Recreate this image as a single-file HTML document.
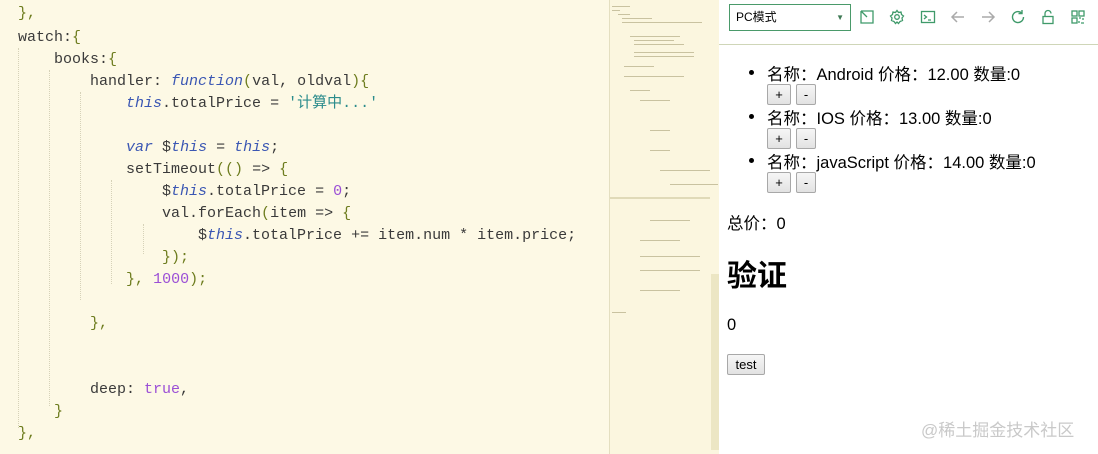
<!DOCTYPE html>
<html><head><meta charset="utf-8"><style>
body{margin:0;width:1098px;height:454px;overflow:hidden;background:#fdf9e5;font-family:"Liberation Sans","Noto Sans CJK SC",sans-serif;position:relative}
#ed{position:absolute;left:0;top:0;width:609px;height:454px;background:#fdf9e5}
.l{position:absolute;left:18px;font-family:"Liberation Mono","Noto Sans CJK SC",monospace;font-size:15px;line-height:22px;color:#3a3a3a;white-space:pre}
.p{color:#6e7d1f}.k{color:#3b57b3;font-style:italic}.s{color:#2b8c8c}.n{color:#9b4fd6}
.g{position:absolute;border-left:1px dotted #d6d2b8;width:0}
#mm{position:absolute;left:609px;top:0;width:109px;height:454px;background:#fbf6df;border-left:1px solid #e4dfc0}
#rp{position:absolute;left:719px;top:0;width:379px;height:454px;background:#fff}
#tb{height:44px;border-bottom:1px solid #cfd6b8;background:#fff;position:relative}
.sel{position:absolute;left:10px;top:4px;width:114px;height:25px;border:1px solid #4a9a6a;font-size:12px;line-height:25px;padding-left:6px;box-sizing:content-box}
.ic{position:absolute;top:9px}
.btn{display:inline-block;border:1px solid #a8a8a8;background:linear-gradient(#f6f6f6,#e2e2e2);font-size:13px;height:19px;line-height:19px;text-align:center;border-radius:2px}
.mm{position:absolute;height:1px;background:#c9c2a0}
.li{position:absolute;left:48px;white-space:nowrap;font-size:16.5px}
.dot{position:absolute;left:30px;width:5px;height:5px;border-radius:50%;background:#000}
</style></head><body>
<div id="ed">
<div class="g" style="left:18px;top:48px;height:380px"></div>
<div class="g" style="left:49px;top:70px;height:336px"></div>
<div class="g" style="left:80px;top:92px;height:208px"></div>
<div class="g" style="left:111px;top:180px;height:104px"></div>
<div class="g" style="left:143px;top:224px;height:30px"></div>
<div class="l" style="top:3px"><span class="p">},</span></div>
<div class="l" style="top:27px">watch:<span class="p">{</span></div>
<div class="l" style="top:49px">    books:<span class="p">{</span></div>
<div class="l" style="top:71px">        handler: <span class="k">function</span><span class="p">(</span>val, oldval<span class="p">){</span></div>
<div class="l" style="top:93px">            <span class="k">this</span>.totalPrice = <span class="s">'计算中...'</span></div>
<div class="l" style="top:137px">            <span class="k">var</span> $<span class="k">this</span> = <span class="k">this</span>;</div>
<div class="l" style="top:159px">            setTimeout<span class="p">(()</span> =&gt; <span class="p">{</span></div>
<div class="l" style="top:181px">                $<span class="k">this</span>.totalPrice = <span class="n">0</span>;</div>
<div class="l" style="top:203px">                val.forEach<span class="p">(</span>item =&gt; <span class="p">{</span></div>
<div class="l" style="top:225px">                    $<span class="k">this</span>.totalPrice += item.num * item.price;</div>
<div class="l" style="top:247px">                <span class="p">});</span></div>
<div class="l" style="top:269px">            <span class="p">},</span> <span class="n">1000</span><span class="p">);</span></div>
<div class="l" style="top:313px">        <span class="p">},</span></div>
<div class="l" style="top:379px">        deep: <span class="n">true</span>,</div>
<div class="l" style="top:401px">    <span class="p">}</span></div>
<div class="l" style="top:423px"><span class="p">},</span></div>
</div>
<div id="mm">
<div class="mm" style="left:2px;top:6px;width:18px"></div><div class="mm" style="left:2px;top:10px;width:8px"></div>
<div class="mm" style="left:8px;top:14px;width:12px"></div><div class="mm" style="left:12px;top:18px;width:30px"></div>
<div class="mm" style="left:12px;top:22px;width:80px"></div><div class="mm" style="left:20px;top:36px;width:50px"></div>
<div class="mm" style="left:24px;top:40px;width:40px"></div><div class="mm" style="left:24px;top:44px;width:50px"></div>
<div class="mm" style="left:24px;top:52px;width:60px"></div><div class="mm" style="left:24px;top:56px;width:60px"></div>
<div class="mm" style="left:14px;top:66px;width:30px"></div><div class="mm" style="left:14px;top:76px;width:60px"></div>
<div class="mm" style="left:20px;top:90px;width:20px"></div><div class="mm" style="left:30px;top:100px;width:30px"></div>
<div class="mm" style="left:40px;top:130px;width:20px"></div><div class="mm" style="left:40px;top:150px;width:20px"></div>
<div class="mm" style="left:50px;top:170px;width:50px"></div><div class="mm" style="left:60px;top:184px;width:48px"></div>
<div class="mm" style="left:0px;top:197px;width:100px;height:2px;background:#e0dab8"></div>
<div class="mm" style="left:40px;top:220px;width:40px"></div><div class="mm" style="left:30px;top:240px;width:40px"></div>
<div class="mm" style="left:30px;top:256px;width:60px"></div><div class="mm" style="left:30px;top:270px;width:60px"></div>
<div class="mm" style="left:30px;top:290px;width:40px"></div><div class="mm" style="left:2px;top:312px;width:14px"></div>
<div style="position:absolute;left:101px;top:274px;width:8px;height:176px;background:#ece6c4"></div>
</div>
<div id="rp">
<div id="tb">
<div class="sel">PC模式<span style="position:absolute;right:6px;top:0;font-size:8px;color:#3f7a55">▼</span></div>
<svg class="ic" style="left:140px" width="16" height="16" viewBox="0 0 16 16" fill="none" stroke="#3f9a6a" stroke-width="1.3"><path d="M2 5V14H14V2H5M2 2L8 8M2 2H6M2 2V6"/></svg>
<svg class="ic" style="left:170px" width="16" height="16" viewBox="0 0 16 16" fill="none" stroke="#3f9a6a" stroke-width="1.3"><circle cx="8" cy="8" r="2.3"/><path d="M8 1.5L9.5 3.5L12 3L12.5 5.5L14.5 7L13 9L13.5 11.5L11 12.5L9.5 14.5L8 13L6.5 14.5L5 12.5L2.5 11.5L3 9L1.5 7L3.5 5.5L4 3L6.5 3.5Z"/></svg>
<svg class="ic" style="left:201px" width="16" height="16" viewBox="0 0 16 16" fill="none" stroke="#3f9a6a" stroke-width="1.3"><rect x="1.5" y="2.5" width="13" height="11"/><path d="M4 6L6.5 8L4 10M8 11H11"/></svg>
<svg class="ic" style="left:231px" width="16" height="16" viewBox="0 0 16 16" fill="none" stroke="#aaa" stroke-width="1.5"><path d="M14 8H2M7 3L2 8L7 13"/></svg>
<svg class="ic" style="left:261px" width="16" height="16" viewBox="0 0 16 16" fill="none" stroke="#aaa" stroke-width="1.5"><path d="M2 8H14M9 3L14 8L9 13"/></svg>
<svg class="ic" style="left:291px" width="16" height="16" viewBox="0 0 16 16" fill="none" stroke="#3f9a6a" stroke-width="1.4"><path d="M13.5 8A5.5 5.5 0 1 1 11.5 3.8M12 1V4.5H8.5"/></svg>
<svg class="ic" style="left:321px" width="16" height="16" viewBox="0 0 16 16" fill="none" stroke="#3f9a6a" stroke-width="1.3"><rect x="3" y="7.5" width="10" height="7"/><path d="M5 7.5V4.5A3 3 0 0 1 11 4.5"/></svg>
<svg class="ic" style="left:351px" width="16" height="16" viewBox="0 0 16 16" fill="none" stroke="#3f9a6a" stroke-width="1.3"><rect x="2" y="2" width="5" height="5"/><rect x="9" y="2" width="5" height="5"/><rect x="2" y="9" width="5" height="5"/><path d="M9 9H11M13 9V11M9 12V14M11 14H14"/></svg>
</div>
<div style="position:absolute;left:0;top:58px;color:#000">
<div class="dot" style="top:12px"></div>
<div class="li" style="top:3px">名称：Android 价格：12.00 数量:0</div>
<div class="btn" style="position:absolute;left:48px;top:26px;width:22px">+</div><div class="btn" style="position:absolute;left:77px;top:26px;width:18px">-</div>
<div class="dot" style="top:56px"></div>
<div class="li" style="top:47px">名称：IOS 价格：13.00 数量:0</div>
<div class="btn" style="position:absolute;left:48px;top:70px;width:22px">+</div><div class="btn" style="position:absolute;left:77px;top:70px;width:18px">-</div>
<div class="dot" style="top:100px"></div>
<div class="li" style="top:91px">名称：javaScript 价格：14.00 数量:0</div>
<div class="btn" style="position:absolute;left:48px;top:114px;width:22px">+</div><div class="btn" style="position:absolute;left:77px;top:114px;width:18px">-</div>
</div>
<div style="position:absolute;left:8px;top:210px;font-size:16.5px">总价：0</div>
<div style="position:absolute;left:8px;top:253px;font-size:30px;font-weight:bold;font-family:'Noto Sans CJK SC',sans-serif;line-height:40px">验证</div>
<div style="position:absolute;left:8px;top:316px;font-size:16.5px">0</div>
<div class="btn" style="position:absolute;left:8px;top:354px;width:36px;height:19px">test</div>
<div style="position:absolute;left:202px;top:416px;font-size:17px;color:#c9c9c9;white-space:nowrap">@稀土掘金技术社区</div>
</div>
</body></html>
